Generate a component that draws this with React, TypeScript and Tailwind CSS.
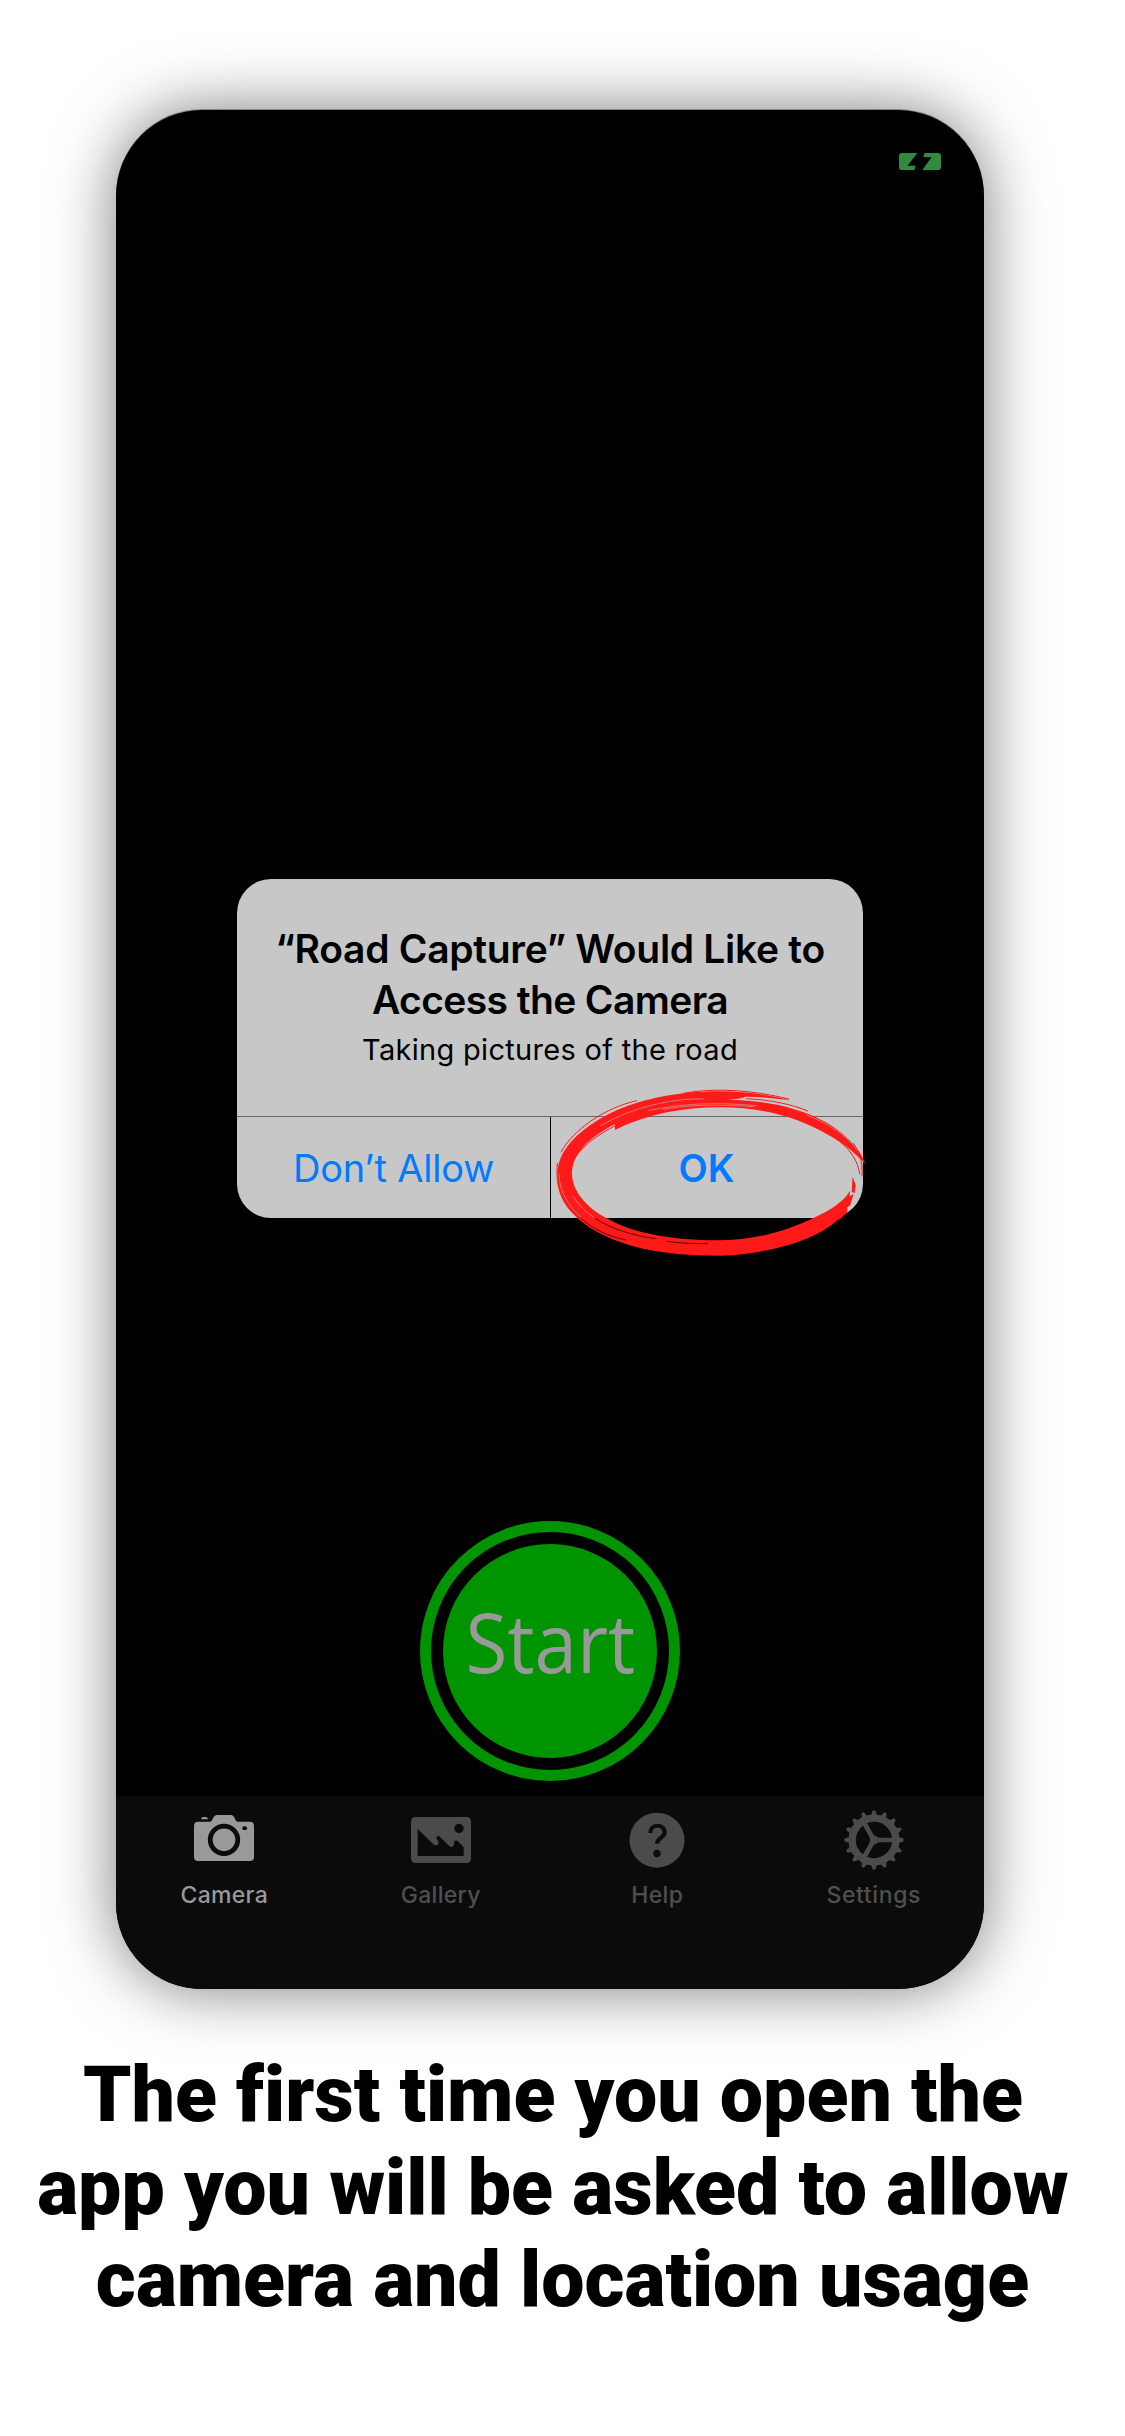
import type { ReactNode } from "react";

function Battery() {
  return (
    <svg className="h-[17px] w-[42px]" viewBox="0 0 125 51" preserveAspectRatio="none" fill="#328a3e">
      <path d="M10 0H55L25 38H50L46 51H8Q0 51 0 42V10Q0 0 10 0Z" />
      <path d="M76 0H116Q125 0 125 10V42Q125 51 116 51H69L97 13H72Z" />
    </svg>
  );
}

function CameraIcon() {
  return (
    <svg className="h-[60px] w-[60px]" viewBox="72 60 180 180" fill="#999">
      <path d="M93 88Q94 81 101 81H106Q113 81 114 88Z" />
      <path
        fillRule="evenodd"
        d="M84 95H120C129 95 128 75 142 75H182C196 75 193 95 204 95H240Q252 95 252 108V200Q252 213 240 213H84Q72 213 72 200V108Q72 95 84 95ZM162 101A48.500 48.500 0 1 0 162 198A48.500 48.500 0 1 0 162 101ZM162 115.500A34 34 0 1 1 162 183.500A34 34 0 1 1 162 115.500ZM224 109A7.500 6 0 1 0 224 121A7.500 6 0 1 0 224 109Z"
      />
    </svg>
  );
}

function GalleryIcon() {
  return (
    <svg className="h-[60px] w-[60px]" viewBox="723 60 180 180">
      <rect x="723" y="81" width="180" height="138" rx="13" fill="#4b4b4b" />
      <circle cx="867" cy="115" r="14" fill="#0b0b0b" />
      <path
        fill="#0b0b0b"
        d="M743 116L790 163Q798 169 803 164T804 152Q793 141 806 137L838 168Q845 175 850 168T851 158Q853 149 862 152L881 171V198H743Z"
      />
    </svg>
  );
}

function HelpIcon() {
  return (
    <svg className="h-[60px] w-[60px]" viewBox="112 60 180 180">
      <circle cx="202" cy="150.500" r="82.500" fill="#4b4b4b" />
      <path
        d="M182 129C182 115 191 107 203 107C216 107 225 115 225 127C225 144 203 142 202 161"
        fill="none"
        stroke="#0b0b0b"
        strokeWidth="12"
      />
      <circle cx="202" cy="190.500" r="11" fill="#0b0b0b" />
    </svg>
  );
}

const TEETH = Array.from({ length: 16 }, (_, i) => i * 22.5);

function SettingsIcon() {
  return (
    <svg className="h-[60px] w-[60px]" viewBox="-90 -90 180 180">
      <circle r="65.500" fill="none" stroke="#4b4b4b" strokeWidth="22" />
      {TEETH.map((a) => (
        <path key={a} d="M-12 -72Q-6 -77 -5 -86Q0 -93 5 -86Q6 -77 12 -72Z" fill="#4b4b4b" transform={`rotate(${a})`} />
      ))}
      {[0, 120, 240].map((a) => (
        <path key={a} d="M0 -13Q9 -7 18 -7H58V7H18Q9 7 0 13Z" fill="#4b4b4b" transform={`rotate(${a})`} />
      ))}
      <circle r="12" fill="#4b4b4b" />
    </svg>
  );
}

function BrushCircle() {
  return (
    <svg
      className="pointer-events-none absolute left-[303px] top-[-19px] h-[420px] w-[350px]"
      viewBox="0 0 1050 1260"
      fill="#ff1a1a"
    >
      <path d="M750 721C700 706 620 694 540 694C410 694 285 718 190 771C110 817 50 873 52 950C52 1040 130 1105 240 1146C330 1178 430 1187 540 1187C690 1182 830 1140 896 1077C918 1057 930 1020 930 992C912 1025 870 1050 825 1072C740 1113 650 1140 530 1141C400 1141 280 1121 200 1075C135 1040 96 990 96 940C97 880 150 830 225 793C310 752 410 735 530 724C570 718 610 716 615 710C660 709 710 716 750 721Z" />
      <path d="M225 793C330 725 500 712 620 722C740 731 850 768 915 828C948 857 972 892 975 912C950 883 915 852 860 822C790 783 690 742 540 742C430 742 320 762 225 810Z" />
      <path d="M938 950L947 975L944 999L935 996Z" />
      <path d="M924 1010L941 1003L934 1023L931 1036L922 1042L922 1057L895 1082Z" />
      <g fill="none" stroke="#ff1a1a" strokeWidth="3" strokeLinecap="round">
        <path d="M430 700C520 682 640 690 746 717" />
        <path d="M620 716C700 720 760 735 803 753" />
        <path d="M888 836C930 865 955 905 959 941" />
        <path d="M940 850C965 885 968 920 966 948" />
        <path d="M52 910C45 990 70 1045 135 1090C170 1118 210 1133 260 1141" />
        <path d="M290 722C190 745 100 810 63 876" />
        <path d="M97 905C130 850 190 810 270 778" />
      </g>
      <g fill="none" stroke="#c7c7c7" strokeWidth="1.500" strokeLinecap="round">
        <path d="M182 797C280 740 400 714 490 717" />
        <path d="M325 752C430 729 530 726 650 737" />
        <path d="M370 748C450 733 550 733 640 740" />
        <path d="M57 945C57 985 80 1035 122 1070" />
        <path d="M100 1010C115 1035 140 1058 165 1075" />
        <path d="M800 765C865 790 925 830 950 870" />
      </g>
      <g fill="none" stroke="#000" strokeWidth="2" strokeLinecap="round">
        <path d="M122 1074C155 1105 205 1130 258 1140" />
        <path d="M165 1075C210 1105 280 1128 348 1136" />
        <path d="M382 1144C420 1150 460 1151 502 1151" />
      </g>
    </svg>
  );
}

function Tab({ label, active, spacing, children }: { label: string; active?: boolean; spacing: string; children: ReactNode }) {
  return (
    <div className={`flex flex-1 flex-col items-center ${active ? "text-[#999]" : "text-[#4f4f4f]"}`}>
      {children}
      <span className={`mt-[10px] text-[23px] font-medium leading-[30px] ${spacing}`}>{label}</span>
    </div>
  );
}

export default function App() {
  return (
    <div className="flex h-[2436px] w-[1125px] flex-col overflow-hidden bg-white font-['Inter',sans-serif]">
      <div className="ml-[116px] mt-[110px] flex h-[1879px] w-[868px] shrink-0 flex-col rounded-[86px] bg-black shadow-[0_-1px_0_#888,0_0_64px_rgba(0,0,0,0.52)]">
        <header className="flex h-[103px] shrink-0 justify-end pr-[43px] pt-[43px]">
          <Battery />
        </header>

        <section className="relative mt-[666px] flex h-[339px] w-[626px] shrink-0 flex-col self-center rounded-[34px] bg-[#c7c7c7] text-center">
          <div className="flex h-[237px] flex-col items-center pt-[44px]">
            <h1 className="whitespace-nowrap text-[39px] font-semibold leading-[51px] text-black">
              <span className="tracking-[-0.3px]">“Road Capture” Would Like to</span>
              <br />
              <span className="tracking-[-0.6px]">Access the Camera</span>
            </h1>
            <p className="mt-[7px] whitespace-nowrap text-[29px] leading-[36px] tracking-[0.3px] text-black">
              Taking pictures of the road
            </p>
          </div>
          <div className="flex h-[102px] border-t border-[#666] text-[38px] leading-[103px] text-[#007aff]">
            <button className="w-[313px] whitespace-nowrap tracking-[-0.2px]">Don’t Allow</button>
            <button className="flex-1 border-l border-black pr-[1px] font-semibold">OK</button>
          </div>
          <BrushCircle />
        </section>

        <div className="mt-[303px] flex size-[260px] shrink-0 items-center justify-center self-center rounded-full border-[11px] border-[#009400]">
          <div className="flex size-[214px] items-center justify-center rounded-full bg-[#009400]">
            <span className="-mt-[20px] scale-x-92 font-['Open_Sans',sans-serif] text-[83px] leading-[100px] text-[#999]">Start</span>
          </div>
        </div>

        <nav className="mt-auto flex h-[193px] shrink-0 rounded-b-[86px] bg-[#0b0b0b] pr-[2px] pt-[14px]">
          <Tab label="Camera" active spacing="tracking-[0.3px]">
            <CameraIcon />
          </Tab>
          <Tab label="Gallery" spacing="tracking-[0.3px]">
            <GalleryIcon />
          </Tab>
          <Tab label="Help" spacing="tracking-[0.4px]">
            <HelpIcon />
          </Tab>
          <Tab label="Settings" spacing="tracking-[0.6px]">
            <SettingsIcon />
          </Tab>
        </nav>
      </div>

      <p className="mt-[60px] whitespace-nowrap text-center font-['Roboto',sans-serif] text-[77px] font-black leading-[92.500px] text-black [font-variant-ligatures:none]">
        The first time you open the&nbsp;
        <br />
        app you will be asked to allow&nbsp;
        <br />
        camera and location usage
      </p>
    </div>
  );
}
